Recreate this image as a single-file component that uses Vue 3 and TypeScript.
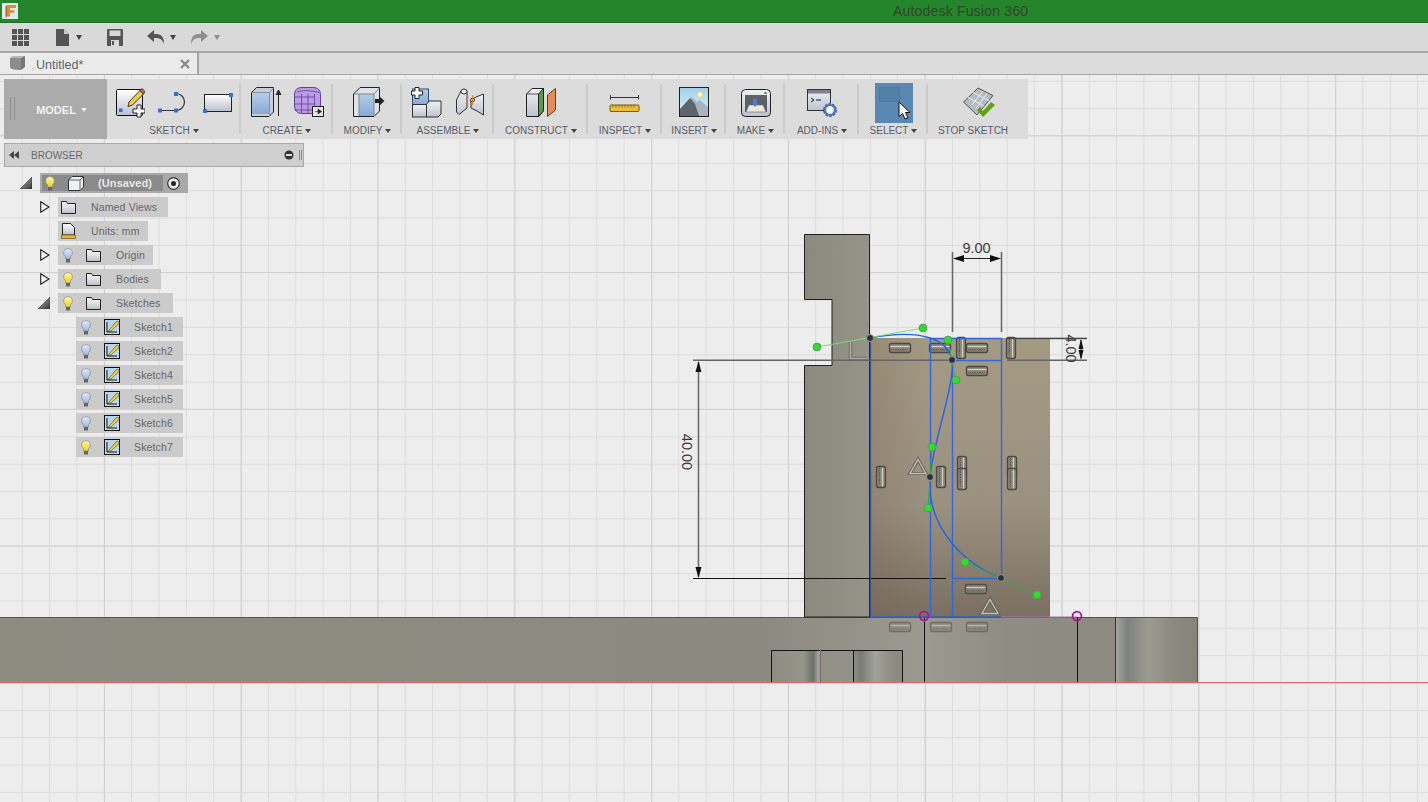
<template>
  <div class="app">
    <svg class="defs" width="0" height="0" aria-hidden="true">
      <defs>
        <linearGradient id="paper" x1="0" y1="0" x2="0" y2="1"><stop offset="0" stop-color="#fff" /><stop offset="1" stop-color="#b9bfcc" /></linearGradient>
        <linearGradient id="blueface" x1="0" y1="0" x2="0" y2="1"><stop offset="0" stop-color="#b4cdea" /><stop offset="1" stop-color="#8aa9d2" /></linearGradient>
        <linearGradient id="greyface" x1="0" y1="0" x2="0" y2="1"><stop offset="0" stop-color="#f0f1f4" /><stop offset="1" stop-color="#bcc2cf" /></linearGradient>
        <linearGradient id="sky" x1="0" y1="0" x2="0" y2="1"><stop offset="0" stop-color="#9fd0ee" /><stop offset="1" stop-color="#e3f0f6" /></linearGradient>
        <linearGradient id="tri" x1="0" y1="0" x2="1" y2="1"><stop offset="0" stop-color="#bbb" /><stop offset="1" stop-color="#333" /></linearGradient>
        <linearGradient id="bulbY" x1="0" y1="0" x2="0" y2="1"><stop offset="0" stop-color="#fff7a8" /><stop offset="1" stop-color="#f2cf22" /></linearGradient>
        <linearGradient id="bulbB" x1="0" y1="0" x2="0" y2="1"><stop offset="0" stop-color="#e6edff" /><stop offset="1" stop-color="#9db6ea" /></linearGradient>
        <linearGradient id="face" x1="0" y1="0" x2="0" y2="1"><stop offset="0" stop-color="#a1977f" /><stop offset=".6" stop-color="#988d7c" /><stop offset="1" stop-color="#756a5b" /></linearGradient>
        <linearGradient id="faceLeft" x1="0" y1="0" x2="1" y2="0"><stop offset="0" stop-color="#6e5a4a" stop-opacity=".25" /><stop offset="1" stop-color="#6e5a4a" stop-opacity="0" /></linearGradient>
        <linearGradient id="upright" x1="0" y1="0" x2="1" y2="0"><stop offset="0" stop-color="#8b8a7f" /><stop offset="1" stop-color="#969488" /></linearGradient>
        <linearGradient id="baseBody" x1="0" y1="0" x2="1" y2="0"><stop offset="0" stop-color="#8e8c81" /><stop offset=".63" stop-color="#8c8a80" /><stop offset=".775" stop-color="#9b9a90" /><stop offset=".84" stop-color="#8f8d83" /><stop offset="1" stop-color="#8c8a80" /></linearGradient>
        <linearGradient id="cyl" x1="0" y1="0" x2="1" y2="0"><stop offset="0" stop-color="#a2a49e" /><stop offset=".15" stop-color="#7f827c" /><stop offset=".4" stop-color="#9c9c93" /><stop offset=".65" stop-color="#8e8c81" /><stop offset="1" stop-color="#85837a" /></linearGradient>
        <linearGradient id="pocketA" x1="0" y1="0" x2="1" y2="0"><stop offset="0" stop-color="#8e8c82" /><stop offset=".65" stop-color="#96958a" /><stop offset=".85" stop-color="#6f726c" /><stop offset=".97" stop-color="#a6a9a2" /><stop offset="1" stop-color="#8a897f" /></linearGradient>
        <linearGradient id="pocketB" x1="0" y1="0" x2="1" y2="0"><stop offset="0" stop-color="#8c8d86" /><stop offset=".15" stop-color="#797b75" /><stop offset=".45" stop-color="#a1a29a" /><stop offset=".75" stop-color="#8f8e84" /><stop offset="1" stop-color="#8a887e" /></linearGradient>
        <pattern id="gridMinor" x="21.7" y="26.1" width="27.36" height="27.35" patternUnits="userSpaceOnUse">
          <path d="M.5 0V27.35M0 .5H27.36" fill="none" stroke="#dcdcdc" stroke-width="1" />
        </pattern>
        <pattern id="gridMajor" x="104" y="272" width="136.8" height="136.75" patternUnits="userSpaceOnUse">
          <path d="M.5 0V136.75M0 .5H136.8" fill="none" stroke="#d0d0d0" stroke-width="1" />
        </pattern>
        <g id="hatch">
          <rect x="-10.5" y="-4.5" width="21" height="9" rx="2" fill="#8b8779" stroke="#4a4842" stroke-width="1.3" />
          <path d="M-9.5 -1.5H9.5" stroke="#d3d1c6" stroke-width="1.2" />
          <path d="M-9 1q1.2 2.6 2.4 0q1.2 2.6 2.4 0q1.2 2.6 2.4 0q1.2 2.6 2.4 0q1.2 2.6 2.4 0q1.2 2.6 2.4 0q1.2 2.6 2.4 0" fill="#aeaba0" stroke="#45433d" stroke-width=".8" />
        </g>
      </defs>
    </svg>

    <header class="title-bar">
      <svg class="logo" width="16" height="16" viewBox="0 0 16 16">
        <rect width="16" height="16" fill="#dcecf2" />
        <path d="M5 2H14V5H8V7.2H12.5V9.8H8V13.5H5Z" fill="#e08a2c" />
        <path d="M5 2L3.5 3.5V14.5L5 13.5Z" fill="#b9651f" />
      </svg>
      <span class="app-title">Autodesk Fusion 360</span>
    </header>

    <nav class="quick-bar">
      <svg class="qa-grid" width="17" height="17" viewBox="0 0 17 17" fill="#555">
        <template v-for="r in 3" :key="r">
          <rect v-for="c in 3" :key="c" :x="(c - 1) * 6" :y="(r - 1) * 6" width="5" height="5" />
        </template>
      </svg>
      <svg class="qa-doc" width="14" height="17" viewBox="0 0 14 17"><path d="M0 0H8L13 5V17H0Z" fill="#555" /><path d="M8 0V5H13" fill="#ccc" /></svg>
      <i class="qa-caret"></i>
      <svg class="qa-save" width="16" height="17" viewBox="0 0 16 17"><path d="M1 0H15Q16 0 16 1V16Q16 17 15 17H1Q0 17 0 16V1Q0 0 1 0Z" fill="#555" /><rect x="2.5" y="1.5" width="11" height="5.5" fill="#d9d9d9" /><rect x="4" y="11" width="8" height="6" fill="#d9d9d9" /><rect x="5" y="12" width="2" height="4" fill="#555" /></svg>
      <svg class="qa-undo" width="17" height="14" viewBox="0 0 17 14"><path d="M7 0V4H10Q17 4 17 14Q15 8 10 8H7V12L0 6Z" fill="#555" /></svg>
      <i class="qa-caret"></i>
      <svg class="qa-redo" width="17" height="14" viewBox="0 0 17 14"><path d="M10 0V4H7Q0 4 0 14Q2 8 7 8H10V12L17 6Z" fill="#8e8e8e" /></svg>
      <i class="qa-caret redo"></i>
    </nav>

    <div class="tab-row">
      <div class="tab">
        <svg width="17" height="17" viewBox="0 0 17 17"><path d="M1 3L5 1H16V12L12 15L3 14L1 12Z" fill="#777" /><path d="M1 3H12V15L3 14L1 12Z" fill="#8d8d8d" /><path d="M1 3L5 1H16L12 3Z" fill="#b5b5b5" /></svg>
        <span class="tab-name">Untitled*</span>
        <svg class="tab-close" width="10" height="10" viewBox="0 0 10 10"><path d="M1 1L9 9M9 1L1 9" stroke="#8a8a8a" stroke-width="2.4" /></svg>
      </div>
    </div>

    <main class="canvas">
      <svg class="scene" width="1428" height="727" viewBox="0 75 1428 727">
        <rect y="75" width="1428" height="727" fill="url(#gridMinor)" />
        <rect y="75" width="1428" height="727" fill="url(#gridMajor)" />

        <rect y="617" width="1197" height="65" fill="url(#baseBody)" />
        <rect x="1115.5" y="617" width="82" height="65" fill="url(#cyl)" />
        <rect x="771.5" y="650" width="49" height="32" fill="url(#pocketA)" />
        <rect x="853.5" y="650" width="49" height="32" fill="url(#pocketB)" />
        <path d="M0 617.5H1197.5V682" fill="none" stroke="#55544e" />
        <path d="M771.5 682V650.5H902.5V682M853.5 650V682M924.5 617V682M1077.5 617V682" fill="none" stroke="#111" />
        <path d="M820.5 650V682" stroke="#6d6d66" />
        <path d="M1115.5 617V682" stroke="#33332f" />
        <path d="M0 682.5H1428" stroke="#e0686a" />

        <path d="M804.5 234.5H869.5V617H804.5V365.5H832V299.5H804.5Z" fill="url(#upright)" stroke="#1f1f1d" />
        <rect x="870" y="338" width="180" height="279" fill="url(#face)" fill-opacity=".96" />
        <rect x="870" y="338" width="60" height="279" fill="url(#faceLeft)" />

        <g v-for="h in horizontalMarks" :key="'h' + h[0] + h[1]" :transform="`translate(${h[0]} ${h[1]})`" :opacity="h[2]"><use href="#hatch" /></g>
        <g v-for="v in verticalMarks" :key="'v' + v[0] + v[1]" :transform="`translate(${v[0]} ${v[1]}) rotate(90)`"><use href="#hatch" /></g>
        <g v-for="t in triangles" :key="'t' + t[0]" :transform="`translate(${t[0]} ${t[1]})`">
          <path d="M0 -7.5L8 6.5H-8Z" fill="none" stroke="#5f5d55" stroke-width="3.2" />
          <path d="M0 -7.5L8 6.5H-8Z" fill="none" stroke="#c4c2b8" stroke-width="1.4" />
        </g>

        <path d="M850.5 342V358.5H866" fill="none" stroke="#6f6e66" stroke-width="3.5" />
        <path d="M850.5 342V358.5H866" fill="none" stroke="#b0afa6" stroke-width="1.4" />

        <g fill="none" stroke="#666" stroke-width="1.5">
          <path d="M693 360.2H952M1007 338.4H1087M1007 360.2H1087M952.5 252V332M1001.5 252V332M698.5 362V577" />
        </g>
        <path d="M693 578.5H946" stroke="#111" />
        <path d="M1007 338.4H1087" stroke="#444" />
        <path d="M954 258.5H999" stroke="#222" />
        <path d="M1081 340V358" stroke="#222" />
        <g fill="#111">
          <path d="M953 258.5L964 255V262Z" /><path d="M1001 258.5L990 255V262Z" />
          <path d="M698.5 361L695.5 372H701.5Z" /><path d="M698.5 578L695.5 567H701.5Z" />
          <path d="M1081 339L1078.5 349H1083.5Z" /><path d="M1081 360L1078.5 350H1083.5Z" />
        </g>
        <text class="dim" x="976.5" y="253" text-anchor="middle">9.00</text>
        <text class="dim" text-anchor="middle" transform="translate(682 452) rotate(90)">40.00</text>
        <text class="dim" text-anchor="middle" transform="translate(1066 348.5) rotate(90)">4.00</text>

        <path d="M1001 617H1077" stroke="#b070b8" stroke-width="1" />
        <path d="M870.5 338V617" stroke="#37599f" stroke-width="1.4" />
        <path d="M870 617H1001" stroke="#2f5fc8" stroke-width="1.4" />
        <g fill="none" stroke="#2f67e2" stroke-width="1.4">
          <path d="M930.5 338V617M952.5 360V617M1001.5 338V578M930 338.5H1001.5M952 360.5H1001M952 578.5H1001" />
          <path d="M870 338C923 328 948 340 952 360C956 380 932 447 930 477C927 520 955 560 1001 578" stroke="#1f63ec" />
        </g>
        <g fill="none" stroke="#75e075" stroke-width="1">
          <path d="M817 347L923 328" />
          <path d="M948 340L956 380" stroke="#3dbb3d" />
          <path d="M932 447L928 508" stroke="#2fae2f" />
          <path d="M965 562L1037 595" stroke="#35b035" />
        </g>
        <circle v-for="p in handles" :key="'g' + p[0]" :cx="p[0]" :cy="p[1]" r="3.9" fill="#22e622" stroke="#6b8f68" stroke-width="1" />
        <circle v-for="p in knots" :key="'k' + p[0]" :cx="p[0]" :cy="p[1]" r="3.5" fill="#2d2f36" stroke="#9a9a96" stroke-width="1" />
        <circle cx="924" cy="616" r="4.4" fill="none" stroke="#b0128c" stroke-width="1.8" />
        <circle cx="1077" cy="616" r="4.4" fill="none" stroke="#b0128c" stroke-width="1.8" />
      </svg>

      <div class="ribbon">
        <button class="model-btn"><i class="grip"></i><span>MODEL</span><i class="caret white"></i></button>

        <section class="group g-sketch">
          <div class="icons">
            <svg width="30" height="32" viewBox="116 87 30 32">
              <rect x="117.5" y="89.5" width="26" height="26" rx="1" fill="url(#paper)" stroke="#111" />
              <rect x="120" y="108.5" width="3.5" height="3.5" fill="#3a6fd0" />
              <path d="M130 102L141 90.5L144.5 94L133.5 105L129 106.5Z" fill="#f6cf3d" stroke="#222" stroke-width=".9" />
              <path d="M141 90.5L143 88.5L146 91.5L144.5 94Z" fill="#c7744b" stroke="#222" stroke-width=".8" />
              <path d="M138 105H142V109H146V113H142V117H138V113H134V109H138Z" fill="#fff" stroke="#222" />
            </svg>
            <svg width="33" height="32" viewBox="158 87 33 32">
              <path d="M161 110.5H177A8.5 8.5 0 0 0 177 93.5" fill="none" stroke="#333" stroke-width="1.2" />
              <g fill="#3a6fd0"><rect x="175" y="92" width="4" height="4" /><rect x="159" y="108.5" width="4" height="4" /><rect x="175" y="108.5" width="4" height="4" /></g>
            </svg>
            <svg width="32" height="32" viewBox="201 87 32 32">
              <rect x="203.5" y="94.5" width="27" height="17" fill="url(#paper)" stroke="#222" />
              <g fill="#3a6fd0"><rect x="228" y="93" width="4" height="4" /><rect x="202" y="109" width="4" height="4" /></g>
            </svg>
          </div>
          <div class="label">SKETCH<i class="caret"></i></div>
        </section>

        <section class="group g-create">
          <div class="icons">
            <svg width="32" height="32" viewBox="251 87 32 32">
              <path d="M251.5 92.5L256.5 87.5H273.5V112L269 116.5H251.5Z" fill="#c8ced9" stroke="#222" />
              <rect x="252" y="93" width="17" height="21" fill="url(#blueface)" />
              <path d="M269.5 93V116M252 92.5H269.5L273.5 88" fill="none" stroke="#8a8f99" />
              <path d="M278.5 116V92M276 95L278.5 90L281 95" fill="#222" stroke="#222" />
            </svg>
            <svg width="32" height="32" viewBox="293 87 32 32">
              <path d="M294.5 95Q294.5 87.5 302 87.5H313Q320.5 87.5 320.5 95V105Q320.5 113.5 313 113.5H302Q294.5 113.5 294.5 105Z" fill="#bd9be8" stroke="#5d3f94" />
              <path d="M294.5 97H314.5M294.5 104H314.5M294.5 110H314M301.5 94V113M308 94V113M314.5 94V111M297 92Q306 89 319 92.5" fill="none" stroke="#5d3f94" stroke-width=".8" />
              <rect x="312.5" y="106.5" width="11" height="10" fill="#e4e4e4" stroke="#222" />
              <path d="M315 111.5H318V109L321.5 111.5L318 114V111.5" fill="#222" stroke="#222" stroke-width=".6" />
            </svg>
          </div>
          <div class="label">CREATE<i class="caret"></i></div>
        </section>

        <section class="group g-modify">
          <div class="icons">
            <svg width="33" height="32" viewBox="352 87 33 32">
              <path d="M353.5 94L360 87.5H379.5V111L374 116.5H353.5Z" fill="#dfe2e8" stroke="#222" />
              <rect x="359" y="94" width="15" height="22" fill="url(#blueface)" />
              <path d="M374 94V116M354 94H374L379.5 88M359 94V116" fill="none" stroke="#7e8592" />
              <path d="M375 99H379V96L384.5 101L379 106V103H375Z" fill="#222" />
            </svg>
          </div>
          <div class="label">MODIFY<i class="caret"></i></div>
        </section>

        <section class="group g-assemble">
          <div class="icons">
            <svg width="32" height="32" viewBox="411 87 32 32">
              <rect x="412.5" y="89" width="16" height="15.5" fill="url(#blueface)" stroke="#2d4d86" />
              <rect x="412.5" y="104.5" width="14" height="12.5" fill="url(#greyface)" stroke="#333" />
              <path d="M426.5 104.5L429 101H441V114L438 117H426.5Z" fill="url(#greyface)" stroke="#333" />
              <path d="M415 87.5V91H411.5V95H415V98.5H419V95H422.5V91H419V87.5Z" fill="#fff" stroke="#222" />
            </svg>
            <svg width="30" height="32" viewBox="455 87 30 32">
              <path d="M456.5 100L461 91H467V108L459 114.5L456.5 112Z" fill="url(#greyface)" stroke="#333" />
              <ellipse cx="464" cy="91.5" rx="3" ry="2.5" fill="#e8e8e8" stroke="#333" />
              <path d="M471 108V100L476 97L483.5 94V115L477 111Z" fill="url(#greyface)" stroke="#333" />
              <ellipse cx="472.5" cy="100" rx="2" ry="1.8" fill="#e8e8e8" stroke="#333" />
              <path d="M466 104L468 97M472.5 95V105" stroke="#e07f2e" fill="none" />
            </svg>
          </div>
          <div class="label">ASSEMBLE<i class="caret"></i></div>
        </section>

        <section class="group g-construct">
          <div class="icons">
            <svg width="32" height="32" viewBox="525 87 32 32">
              <path d="M526.5 94L532 88.5H543.5V110L539 116.5H526.5Z" fill="url(#greyface)" stroke="#222" />
              <path d="M538.5 94L543.5 88.5V111L538.5 116.5Z" fill="#5a9a4a" stroke="#222" />
              <path d="M526.5 94H538.5" stroke="#555" />
              <path d="M547.5 95L555.5 88.5V110L547.5 116.5Z" fill="#e68e58" stroke="#6d3b1e" />
            </svg>
          </div>
          <div class="label">CONSTRUCT<i class="caret"></i></div>
        </section>

        <section class="group g-inspect">
          <div class="icons">
            <svg width="31" height="32" viewBox="609 87 31 32">
              <path d="M610.5 95V99.5M638.5 95V99.5M610.5 97.5H638.5" fill="none" stroke="#333" />
              <rect x="610" y="105" width="29" height="6.5" rx="1" fill="#ecc12d" stroke="#6e5a1a" />
              <path d="M613 105V107.5M616 105V107.5M619 105V107.5M622 105V107.5M625 105V107.5M628 105V107.5M631 105V107.5M634 105V107.5" stroke="#6e5a1a" stroke-width=".8" />
            </svg>
          </div>
          <div class="label">INSPECT<i class="caret"></i></div>
        </section>

        <section class="group g-insert">
          <div class="icons">
            <svg width="31" height="32" viewBox="679 87 31 32">
              <rect x="679.5" y="87.5" width="29" height="29" fill="url(#sky)" stroke="#222" />
              <circle cx="700" cy="94.5" r="2.8" fill="#fdf6c0" stroke="#f1cd7c" />
              <path d="M680 111L692 97L697 102L700 100L708 107V116H680Z" fill="#a9b3bd" />
              <path d="M680 116V109L690 98L695 104L699 116Z" fill="#5f636c" />
            </svg>
          </div>
          <div class="label">INSERT<i class="caret"></i></div>
        </section>

        <section class="group g-make">
          <div class="icons">
            <svg width="31" height="32" viewBox="741 87 31 32">
              <rect x="741.5" y="89.5" width="29" height="27" rx="4" fill="url(#greyface)" stroke="#222" />
              <rect x="745" y="95" width="22" height="17" fill="#5c6068" />
              <path d="M746 112L749 105H763L766 112Z" fill="#ece9e2" stroke="#666" stroke-width=".6" />
              <rect x="753" y="99" width="4" height="6" fill="#4f7dd0" />
              <path d="M754 105H756L755 107Z" fill="#2e4f94" />
              <rect x="764.5" y="92" width="2" height="2" fill="#1c9a28" />
            </svg>
          </div>
          <div class="label">MAKE<i class="caret"></i></div>
        </section>

        <section class="group g-addins">
          <div class="icons">
            <svg width="32" height="32" viewBox="806 87 32 32">
              <rect x="807.5" y="89.5" width="23" height="21" fill="url(#greyface)" stroke="#333" />
              <rect x="808" y="90" width="22" height="3.5" fill="#7e828c" />
              <path d="M811 98L814 100L811 102M816 100H821" fill="none" stroke="#222" />
              <circle cx="830" cy="110" r="5.5" fill="#fff" stroke="#3a68b0" stroke-width="3" stroke-dasharray="2.4 1" />
              <circle cx="830" cy="110" r="5" fill="none" stroke="#4a76bc" stroke-width="2.2" />
              <circle cx="830" cy="110" r="2.5" fill="#fff" />
            </svg>
          </div>
          <div class="label">ADD-INS<i class="caret"></i></div>
        </section>

        <section class="group g-select">
          <div class="select-tile">
            <svg width="38" height="40" viewBox="875 83 38 40">
              <rect x="879.5" y="87.5" width="20" height="14" fill="#5280a8" stroke="#4f8f2a" />
              <path d="M899 102V116.5L902.5 113.5L905 119L908 118L905.5 112.5H910Z" fill="#fff" stroke="#111" />
            </svg>
          </div>
          <div class="label">SELECT<i class="caret"></i></div>
        </section>

        <section class="group g-stop">
          <div class="icons">
            <svg width="34" height="32" viewBox="962 87 34 32">
              <path d="M963.5 102L978 88L993 95.5L977 115Z" fill="#b6bac2" stroke="#555" />
              <path d="M968 97.5L984 106M973 92.5L989 100.5M972 105L983 91M976 108.5L987 93.5" fill="none" stroke="#eceef2" />
              <path d="M977 110L980 107L983 111L991 102L995 105L983 117Z" fill="#5ea40f" />
            </svg>
          </div>
          <div class="label">STOP SKETCH</div>
        </section>
      </div>

      <div class="browser">
        <svg class="rewind" width="10" height="8" viewBox="0 0 10 8" fill="#444"><path d="M5 0V8L0 4ZM10 0V8L5 4Z" /></svg>
        <span class="browser-title">BROWSER</span>
        <svg class="minus" width="10" height="10" viewBox="0 0 10 10"><circle cx="5" cy="5" r="4.5" fill="#333" /><rect x="2" y="4" width="6" height="2" fill="#ddd" /></svg>
        <i class="browser-grip"></i>
      </div>

      <ul class="tree">
        <li class="row root">
          <svg class="expander" width="12" height="12" viewBox="0 0 12 12"><path d="M0 12H12V0Z" fill="url(#tri)" stroke="#333" stroke-width=".6" /></svg>
          <div class="pill root-pill">
            <div class="root-inner">
              <svg class="bulb" width="10" height="15" viewBox="0 0 10 15"><path d="M5 .5A4.5 4.5 0 0 1 7.5 8.7V11H2.5V8.7A4.5 4.5 0 0 1 5 .5Z" fill="url(#bulbY)" stroke="#8a8a7a" stroke-width=".7" /><rect x="3" y="11" width="4" height="3.5" fill="#666" /></svg>
              <svg class="cube" width="16" height="15" viewBox="0 0 16 15"><path d="M.5 4L4 .5H15.5V11L12 14.5H.5Z" fill="#eef0f4" stroke="#333" /><path d="M.5 4H12V14.5M12 4L15.5 .5" fill="none" stroke="#666" /></svg>
              <span class="root-name">(Unsaved)</span>
            </div>
            <svg class="radio" width="13" height="13" viewBox="0 0 13 13"><circle cx="6.5" cy="6.5" r="5.8" fill="#eee" stroke="#333" stroke-width="1.2" /><circle cx="6.5" cy="6.5" r="2.5" fill="#222" /></svg>
          </div>
        </li>
        <li v-for="node in nodes" :key="node.label" class="row" :style="{ marginLeft: node.depth * 18 + 'px' }">
          <span class="expander-slot">
            <svg v-if="node.toggle === 'closed'" class="closed" width="10" height="12" viewBox="0 0 10 12"><path d="M.7 .7L9 6L.7 11.3Z" fill="#f3f3f3" stroke="#222" stroke-width="1.1" /></svg>
            <svg v-else-if="node.toggle === 'open'" width="12" height="12" viewBox="0 0 12 12"><path d="M0 12H12V0Z" fill="url(#tri)" stroke="#333" stroke-width=".6" /></svg>
          </span>
          <div class="pill" :style="{ width: node.width + 'px' }">
            <svg v-if="node.bulb" class="bulb" width="10" height="15" viewBox="0 0 10 15"><path d="M5 .5A4.5 4.5 0 0 1 7.5 8.7V11H2.5V8.7A4.5 4.5 0 0 1 5 .5Z" :fill="node.bulb === 'on' ? 'url(#bulbY)' : 'url(#bulbB)'" stroke="#8a8a8a" stroke-width=".7" /><rect x="3" y="11" width="4" height="3.5" fill="#666" /></svg>
            <svg v-if="node.icon === 'folder'" class="node-icon" width="15" height="13" viewBox="0 0 15 13"><path d="M.5 12.5V.5H5.5L6.5 2.5H14.5V12.5Z" fill="url(#paper)" stroke="#222" /></svg>
            <svg v-else-if="node.icon === 'units'" class="node-icon" width="15" height="16" viewBox="0 0 15 16"><path d="M1.5 12V.5H9.5L13.5 4.5V12Z" fill="url(#paper)" stroke="#222" /><rect x=".5" y="12" width="14" height="3.5" fill="#e8b52f" stroke="#6e5a1a" stroke-width=".7" /></svg>
            <svg v-else class="node-icon sketch" width="16" height="16" viewBox="0 0 16 16"><rect x=".5" y=".5" width="15" height="15" fill="#b8d8f2" stroke="#111" /><path d="M3 3V13H13" fill="none" stroke="#111" /><path d="M5 11L13 2L15.5 4L7 12L4.5 12.5Z" fill="#f6d030" stroke="#222" stroke-width=".5" /></svg>
            <span class="node-label">{{ node.label }}</span>
          </div>
        </li>
      </ul>
    </main>
  </div>
</template>

<script setup lang="ts">
interface TreeNode {
  label: string;
  depth: number;
  width: number;
  toggle?: 'open' | 'closed';
  bulb?: 'on' | 'off';
  icon: 'folder' | 'units' | 'sketch';
}

const nodes: TreeNode[] = [
  { label: 'Named Views', depth: 1, width: 110, toggle: 'closed', icon: 'folder' },
  { label: 'Units: mm', depth: 1, width: 90, icon: 'units' },
  { label: 'Origin', depth: 1, width: 95, toggle: 'closed', bulb: 'off', icon: 'folder' },
  { label: 'Bodies', depth: 1, width: 103, toggle: 'closed', bulb: 'on', icon: 'folder' },
  { label: 'Sketches', depth: 1, width: 115, toggle: 'open', bulb: 'on', icon: 'folder' },
  { label: 'Sketch1', depth: 2, width: 107, bulb: 'off', icon: 'sketch' },
  { label: 'Sketch2', depth: 2, width: 107, bulb: 'off', icon: 'sketch' },
  { label: 'Sketch4', depth: 2, width: 107, bulb: 'off', icon: 'sketch' },
  { label: 'Sketch5', depth: 2, width: 107, bulb: 'off', icon: 'sketch' },
  { label: 'Sketch6', depth: 2, width: 107, bulb: 'off', icon: 'sketch' },
  { label: 'Sketch7', depth: 2, width: 107, bulb: 'on', icon: 'sketch' }
];

// sketch marks, in page coordinates [x, y, opacity]
const horizontalMarks = [
  [900, 348, 1], [940, 348, 1], [977, 348, 1], [977, 371, 1], [976, 589, 0.9],
  [900, 627, 0.55], [941, 627, 0.55], [977, 627, 0.55]
];
const verticalMarks = [
  [961, 348], [1011, 348], [881, 477], [941, 477],
  [962, 467], [962, 479], [1012, 467], [1012, 479]
];
const triangles = [[918, 467], [990, 607]];
const handles = [[817, 347], [923, 328], [948, 340], [956, 380], [932, 447], [928, 508], [965, 562], [1037, 595]];
const knots = [[870, 338], [952, 360], [930, 477], [1001, 578]];
</script>

<style scoped>
.app {
  display: flex;
  flex-direction: column;
  height: 802px;
  overflow: hidden;
  font-family: "Liberation Sans", Arial, sans-serif;
  background: #ededed;
}

.defs {
  position: absolute;
}

.title-bar {
  height: 23px;
  flex: none;
  box-sizing: border-box;
  display: flex;
  align-items: center;
  padding-left: 2px;
  background: #25852a;
  border-bottom: 1px solid #1e6b22;
}

.app-title {
  margin-left: 875px;
  font-size: 14px;
  letter-spacing: .2px;
  color: #33442f;
}

.quick-bar {
  height: 30px;
  flex: none;
  box-sizing: border-box;
  display: flex;
  align-items: center;
  padding-left: 12px;
  background: #d9d9d9;
  border-bottom: 2px solid #a6a6a6;
}

.qa-doc {
  margin-left: 27px;
}

.qa-caret {
  width: 0;
  height: 0;
  margin-left: 6px;
  border-left: 3.5px solid transparent;
  border-right: 3.5px solid transparent;
  border-top: 5px solid #444;
}

.qa-caret.redo {
  border-top-color: #8e8e8e;
}

.qa-save {
  margin-left: 25px;
}

.qa-undo {
  margin-left: 24px;
}

.qa-redo {
  margin-left: 15px;
}

.tab-row {
  height: 22px;
  flex: none;
  box-sizing: border-box;
  background: #dcdcdc;
  border-bottom: 1px solid #a6a6a6;
}

.tab {
  width: 199px;
  height: 21px;
  box-sizing: border-box;
  display: flex;
  align-items: center;
  padding: 0 7px 0 9px;
  background: #ebebeb;
  border-right: 2px solid #a6a6a6;
}

.tab-name {
  margin: 3px 0 0 10px;
  flex: 1;
  font-size: 12.5px;
  color: #5c6472;
}

.canvas {
  position: relative;
  flex: 1;
  padding: 4px;
}

.scene {
  position: absolute;
  top: 0;
  left: 0;
}

.dim {
  font-size: 14.5px;
  fill: #3a3a3a;
}

.ribbon {
  position: relative;
  display: flex;
  width: 1024px;
  height: 60px;
  background: #dcdcdc;
}

.model-btn {
  position: relative;
  width: 103px;
  flex: none;
  display: flex;
  align-items: center;
  justify-content: center;
  gap: 5px;
  padding: 2px 0 0 12px;
  border: 0;
  background: #ababab;
  color: #f2f2f2;
  font: bold 11px "Liberation Sans", Arial, sans-serif;
}

.grip {
  position: absolute;
  left: 6px;
  top: 18px;
  width: 3px;
  height: 23px;
  border-left: 1px solid #8f8f8f;
  border-right: 1px solid #8f8f8f;
}

.group {
  position: relative;
  flex: none;
  box-sizing: border-box;
  display: flex;
  flex-direction: column;
  align-items: center;
}

.group::after {
  content: "";
  position: absolute;
  top: 5px;
  bottom: 5px;
  right: 0;
  width: 2px;
  background: #cbcbcb;
}

.g-sketch { width: 134px; }
.g-create { width: 92px; }
.g-modify { width: 69px; }
.g-assemble { width: 92px; }
.g-construct { width: 94px; }
.g-inspect { width: 74px; }
.g-insert { width: 64px; }
.g-make { width: 59px; }
.g-addins { width: 74px; }
.g-select { width: 69px; }
.g-stop { width: 100px; }

.g-stop::after {
  display: none;
}

.icons {
  width: 100%;
  height: 43px;
  display: flex;
  justify-content: center;
  gap: 12px;
  padding-top: 8px;
  box-sizing: border-box;
}

.g-create .icons { gap: 10px; padding-left: 2px; }
.g-modify .icons { padding-left: 2px; }
.g-inspect .icons { padding-right: 1px; }
.g-insert .icons { padding-left: 1px; }
.g-make .icons { padding-left: 2px; }
.g-stop .icons { padding-left: 2px; }
.g-stop .label { margin-right: 10px; }

.select-tile {
  align-self: flex-start;
  width: 38px;
  height: 40px;
  margin: 4px 0 -1px 16px;
  background: #5b88b3;
}

.select-tile svg,
.icons svg {
  display: block;
}

.label {
  display: flex;
  align-items: center;
  gap: 3px;
  margin-top: 1px;
  font-size: 10px;
  line-height: 15px;
  color: #565c68;
  white-space: nowrap;
}

.caret {
  width: 0;
  height: 0;
  border-left: 3px solid transparent;
  border-right: 3px solid transparent;
  border-top: 4px solid #444;
}

.caret.white {
  border-top-color: #f2f2f2;
}

.browser {
  position: relative;
  width: 300px;
  height: 24px;
  margin-top: 4px;
  box-sizing: border-box;
  display: flex;
  align-items: center;
  padding-left: 4px;
  background: #cfcfcf;
  border: 1px solid #a9a9a9;
}

.browser-title {
  margin-left: 12px;
  flex: 1;
  font-size: 10px;
  color: #6a6a6a;
}

.minus {
  margin-right: 5px;
}

.browser-grip {
  width: 1px;
  height: 10px;
  margin-right: 1px;
  border-left: 1px solid #888;
  border-right: 1px solid #888;
}

.tree {
  position: relative;
  list-style: none;
  margin: 6px 0 0;
  padding: 0 0 0 16px;
  display: flex;
  flex-direction: column;
  gap: 4px;
}

.row {
  display: flex;
  align-items: center;
  height: 20px;
}

.expander-slot {
  width: 20px;
  flex: none;
  display: flex;
  align-items: center;
}

.closed {
  margin-left: 2px;
}

.expander {
  flex: none;
  margin-right: 8px;
}

.pill {
  height: 20px;
  box-sizing: border-box;
  display: flex;
  align-items: center;
  padding-left: 3px;
  background: #cbcbcb;
}

.root-pill {
  width: 148px;
  background: #a9a9a9;
  padding-left: 2px;
}

.root-inner {
  width: 121px;
  height: 16px;
  display: flex;
  align-items: center;
  background: #8a8a8a;
  padding-left: 3px;
  box-sizing: border-box;
}

.root-name {
  margin-left: 14px;
  font-size: 11px;
  letter-spacing: .1px;
  font-weight: bold;
  color: #e8e8e8;
}

.root-inner .bulb {
  margin: 0 3px 0 0;
}

.cube {
  margin-left: 10px;
}

.radio {
  margin-left: 4px;
}

.bulb {
  margin: 0 13px 0 2px;
}

.node-icon {
  flex: none;
}

.node-label {
  margin-left: 15px;
  font-size: 10.5px;
  letter-spacing: .15px;
  color: #666;
}

.sketch + .node-label {
  margin-left: 14px;
}
</style>

<style>
html,
body {
  overflow: hidden;
}
</style>
